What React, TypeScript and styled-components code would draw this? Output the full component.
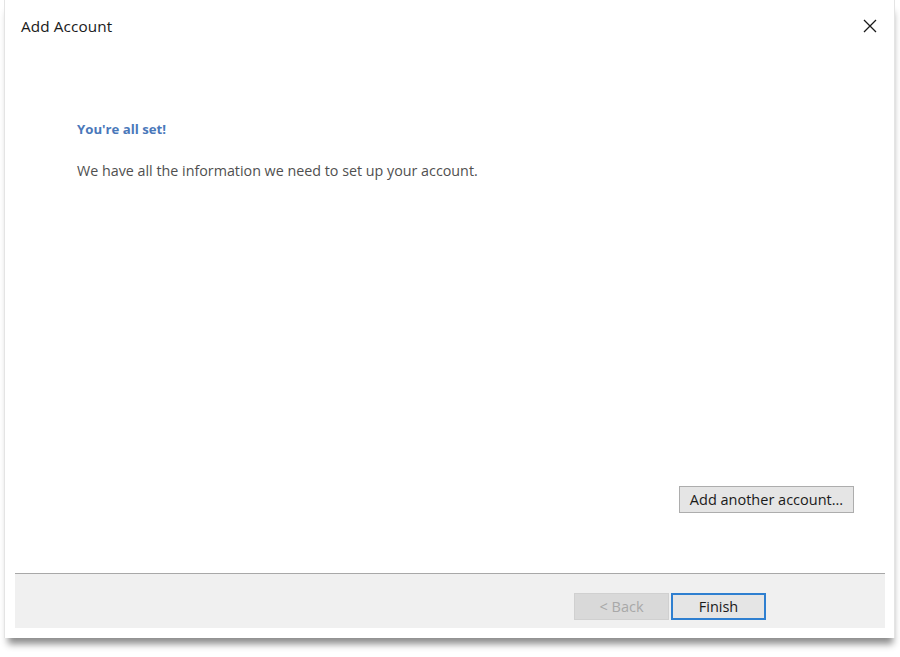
import { createGlobalStyle } from 'styled-components'
import styled from 'styled-components'

const GlobalStyle = createGlobalStyle`
  html, body {
    margin: 0;
    padding: 0;
    background: #ffffff;
  }
  body {
    font-family: "Open Sans", "Noto Sans", "Liberation Sans", sans-serif;
    color: #222;
  }
`

const Page = styled.div`
  width: 900px;
  height: 657px;
  padding: 0 5px 0 4px;
  box-sizing: border-box;
`

const Window = styled.div`
  height: 638px;
  background: #fff;
  border-left: 1px solid #e4e4e4;
  border-right: 1px solid #e4e4e4;
  box-shadow: 1px 9px 7px -3px rgba(0, 0, 0, 0.45);
  display: flex;
  flex-direction: column;
  box-sizing: border-box;
`

const TitleBar = styled.div`
  height: 54px;
  display: flex;
  align-items: flex-start;
  justify-content: space-between;
  padding: 16px 16px 0 16px;
  box-sizing: border-box;
`

const Title = styled.h1`
  margin: 0;
  font-size: 15.3px;
  font-weight: 400;
  color: #1a1a1a;
  letter-spacing: 0.1px;
`

const CloseButton = styled.button`
  border: none;
  background: transparent;
  padding: 0;
  margin-top: 2px;
  width: 16px;
  height: 16px;
  display: flex;
  align-items: center;
  justify-content: center;
  cursor: pointer;
`

const Body = styled.div`
  flex: 1;
  display: flex;
  flex-direction: column;
  padding: 66px 40px 0 72px;
`

const Heading = styled.h2`
  margin: 0;
  font-size: 13.2px;
  font-weight: 700;
  color: #4a78ba;
`

const Message = styled.p`
  margin: 23px 0 0;
  font-size: 14.3px;
  color: #505050;
`

const Spacer = styled.div`
  flex: 1;
`

const ActionRow = styled.div`
  display: flex;
  justify-content: flex-end;
  margin-bottom: 60px;
`

const Button = styled.button<{ $primary?: boolean; $width: number }>`
  width: ${(p) => p.$width}px;
  height: 27px;
  box-sizing: border-box;
  font-family: inherit;
  font-size: 14.5px;
  color: ${(p) => (p.disabled ? '#a8a8a8' : '#1a1a1a')};
  background: ${(p) => (p.disabled ? '#d9d9d9' : '#e5e5e5')};
  border: ${(p) => (p.$primary ? '2px solid #2f7fd0' : p.disabled ? '1px solid #d0d0d0' : '1px solid #adadad')};
  padding: 0;
  cursor: ${(p) => (p.disabled ? 'default' : 'pointer')};
`

const Footer = styled.div`
  margin: 0 9px 10px 10px;
  height: 55px;
  background: #f0f0f0;
  border-top: 1px solid #a8a8a8;
  display: flex;
  justify-content: flex-end;
  align-items: flex-start;
  gap: 2px;
  padding: 19px 119px 0 0;
  box-sizing: border-box;
`

export default function App() {
  return (
    <>
      <GlobalStyle />
      <Page>
        <Window>
          <TitleBar>
            <Title>Add Account</Title>
            <CloseButton aria-label="Close">
              <svg width="14" height="14" viewBox="0 0 14 14">
                <path d="M1 1 L13 13 M13 1 L1 13" stroke="#1a1a1a" strokeWidth="1.3" />
              </svg>
            </CloseButton>
          </TitleBar>
          <Body>
            <Heading>You're all set!</Heading>
            <Message>We have all the information we need to set up your account.</Message>
            <Spacer />
            <ActionRow>
              <Button $width={175}>Add another account...</Button>
            </ActionRow>
          </Body>
          <Footer>
            <Button disabled $width={95}>&lt; Back</Button>
            <Button $primary $width={95}>Finish</Button>
          </Footer>
        </Window>
      </Page>
    </>
  )
}
